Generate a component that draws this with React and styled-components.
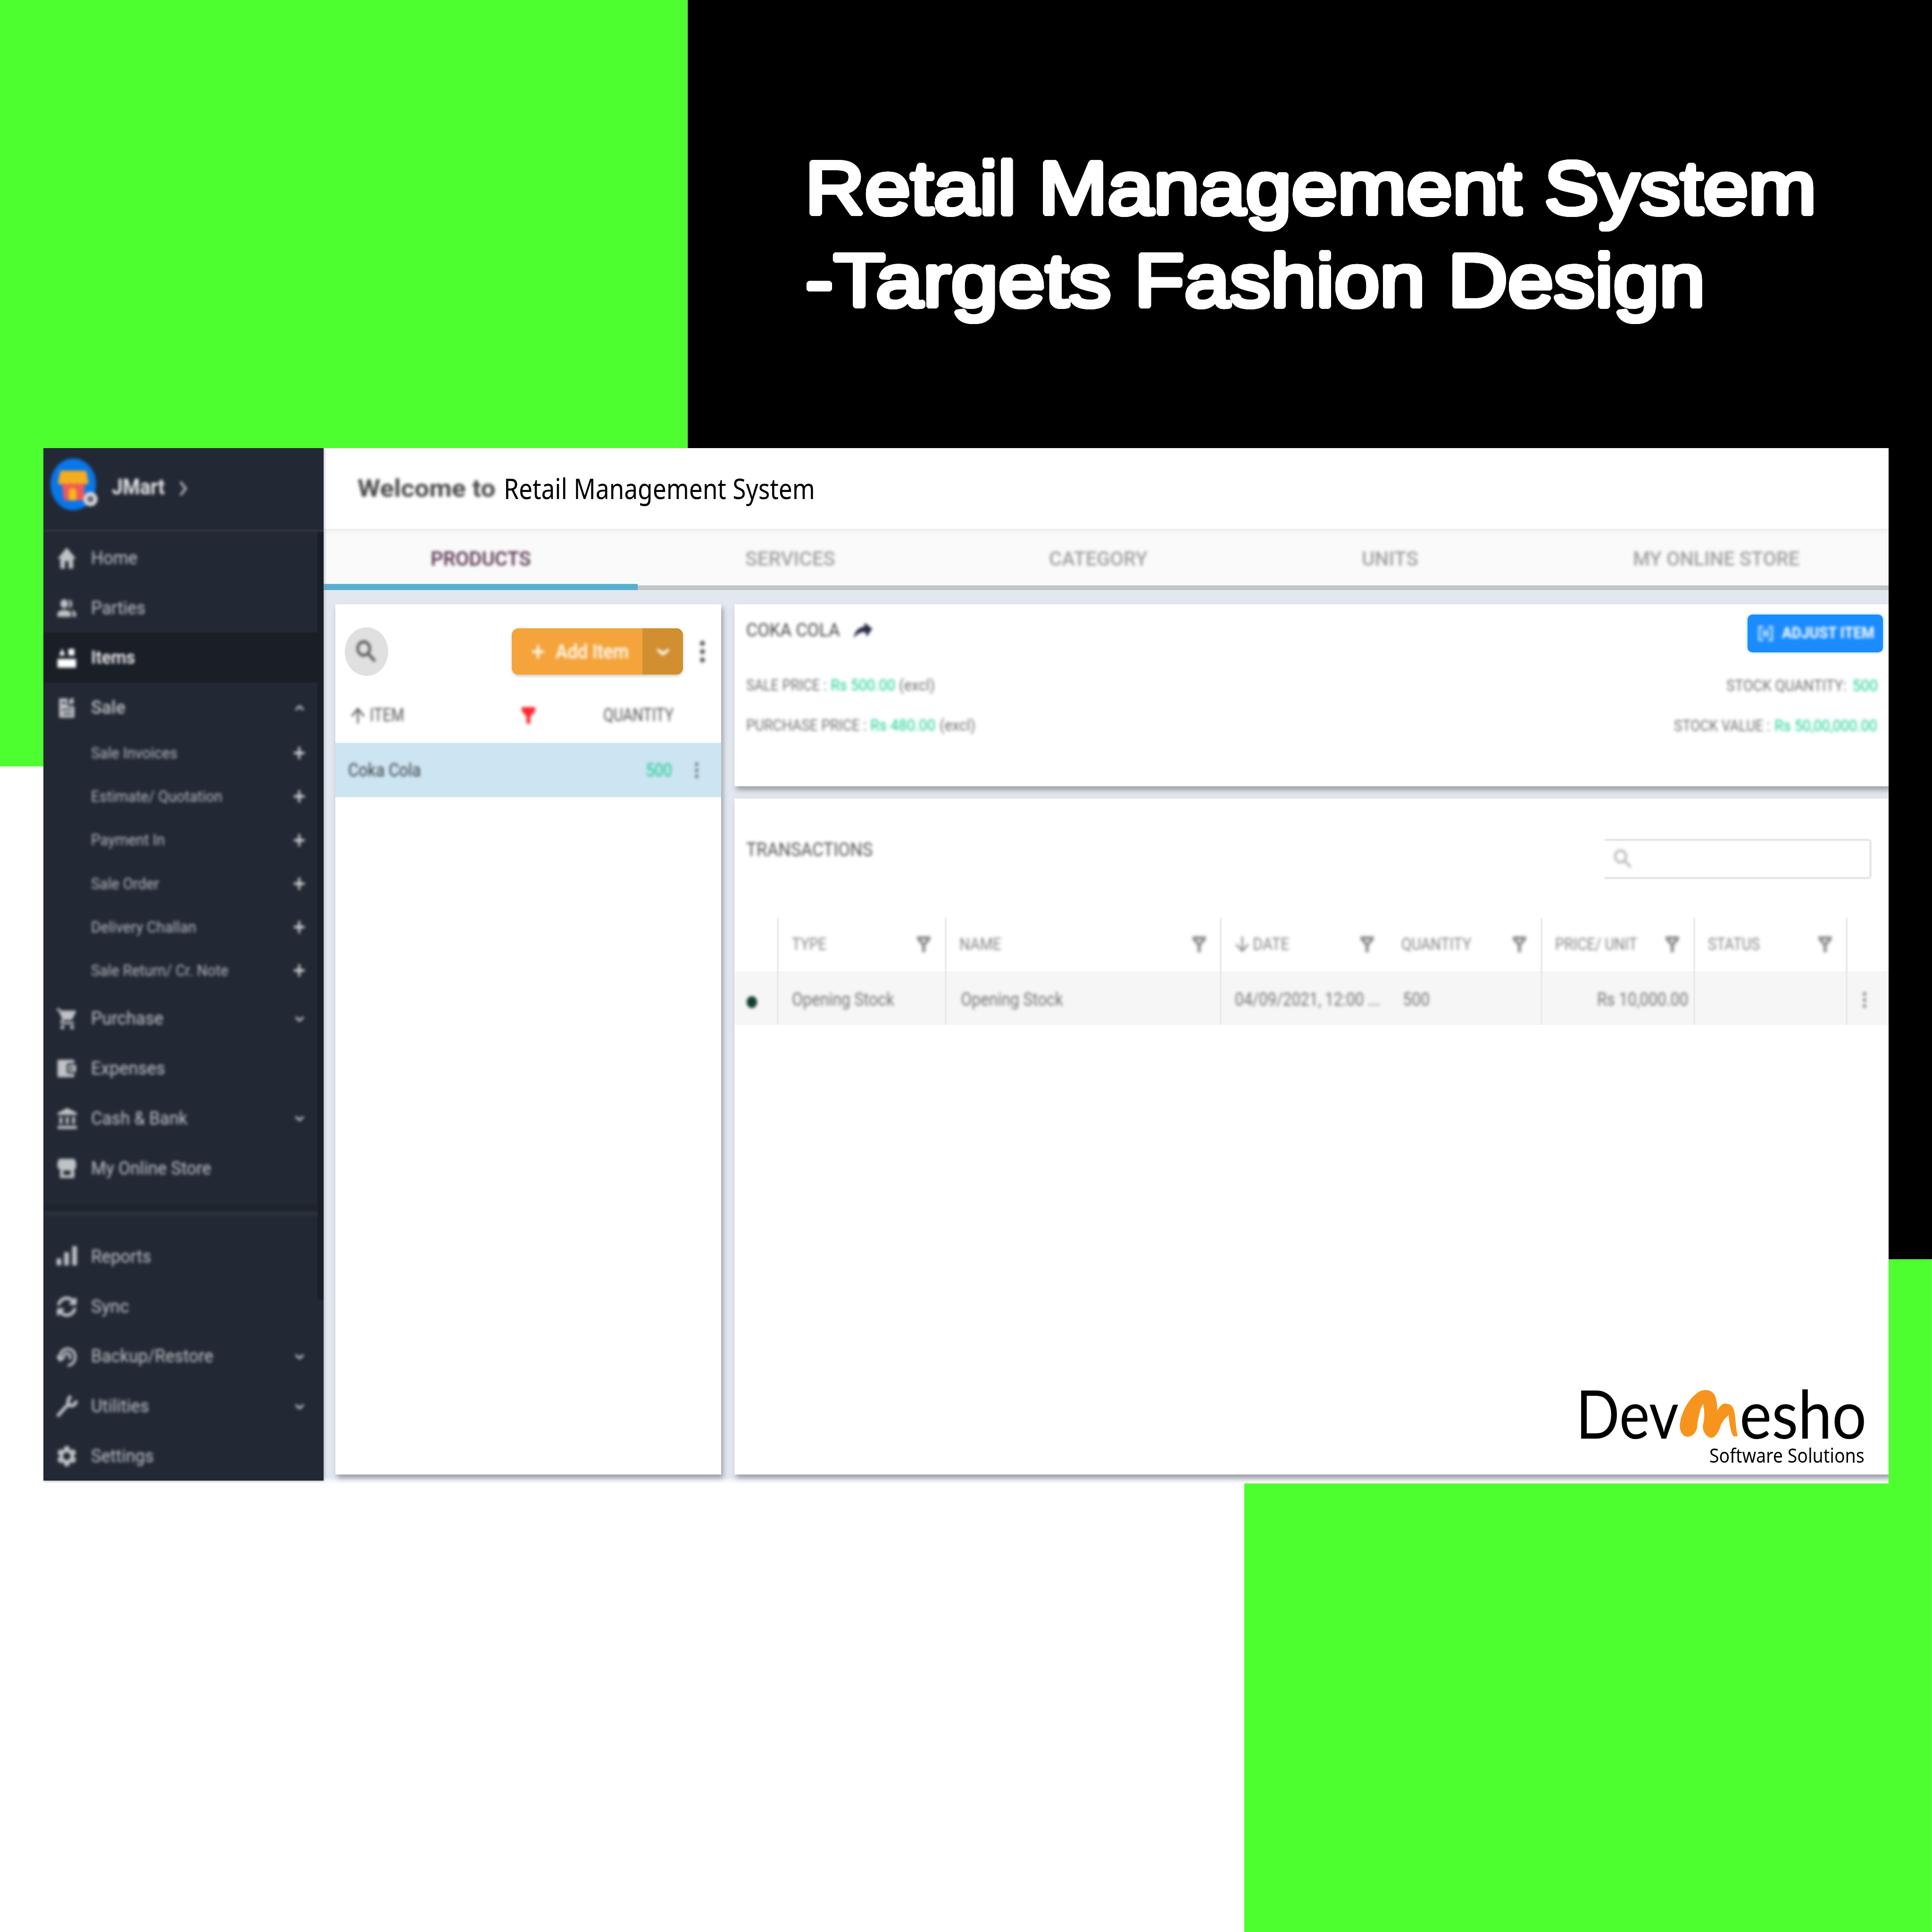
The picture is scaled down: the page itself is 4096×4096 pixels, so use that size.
import React, { useLayoutEffect, useRef, useState } from "react";
import styled, { createGlobalStyle, css } from "styled-components";
import { MdHome, MdShoppingCart, MdAccountBalance, MdSettings, MdSearch } from "react-icons/md";
import { FaSyncAlt } from "react-icons/fa";

/* 1rem is one tenth of a 156.8-unit wide layout grid */
const Global = createGlobalStyle`
  html { font-size: 26.1224px; }
  body { margin: 0; background: #fff; overflow: hidden; }
  * { box-sizing: border-box; }
`;

const GREEN = "#4dff2f";
const rem = (n) => `${n / 10}rem`;

/* ---------- text that keeps to a set measure ---------- */

const soft = css`
  filter: blur(3px);
`;

const Measure = styled.span`
  display: block;
  flex: none;
  width: ${(p) => rem(p.$w)};
  font-family: ${(p) => p.$family || 'Roboto, "Liberation Sans", sans-serif'};
  font-size: ${(p) => rem(p.$size)};
  font-weight: ${(p) => p.$weight || 400};
  color: ${(p) => p.$color || "inherit"};
  line-height: 1.15;
  white-space: nowrap;
  ${(p) => !p.$crisp && soft}
`;

const Stretch = styled.span`
  display: inline-block;
  transform-origin: 0 50%;
`;

function Fit({ w, size, weight, color, family, crisp, children }) {
  const ref = useRef(null);
  const [scale, setScale] = useState(1);
  useLayoutEffect(() => {
    const box = ref.current;
    setScale(box.parentElement.offsetWidth / box.offsetWidth);
  }, [children, w, size]);
  return (
    <Measure $w={w} $size={size} $weight={weight} $color={color} $family={family} $crisp={crisp}>
      <Stretch ref={ref} style={{ transform: `scaleX(${scale})` }}>{children}</Stretch>
    </Measure>
  );
}

/* ---------- poster ---------- */

const Poster = styled.main`
  width: 156.8rem;
  height: 156.8rem;
  display: flex;
  flex-direction: column;
  background-color: #fff;
  background-image: linear-gradient(${GREEN}, ${GREEN}), linear-gradient(${GREEN}, ${GREEN}), linear-gradient(#000, #000);
  background-repeat: no-repeat;
  background-size: 55.8rem 62.2rem, 55.8rem 54.6rem, 101rem 102.2rem;
  background-position: 0 0, 101rem 102.2rem, 55.8rem 0;
`;

const Headline = styled.h1`
  height: 36.38rem;
  margin: 0;
  padding: 11.5rem 0 0 65.35rem;
  display: flex;
  flex-direction: column;
  color: #fff;
  font-weight: 400;
`;

/* concentric shadows thicken the strokes and round their ends */
const ring = [0.06, 0.12, 0.18].flatMap((r) =>
  Array.from({ length: 24 }, (_, i) => {
    const a = (i / 24) * Math.PI * 2;
    return `${(Math.cos(a) * r * 0.95).toFixed(4)}rem ${(Math.sin(a) * r).toFixed(4)}rem 0 #fff`;
  })
).join(", ");

const HeadLine = styled.span`
  height: 7.52rem;
  display: flex;
  align-items: center;
  gap: 1.86rem;
  text-shadow: ${ring};
`;

/* ---------- window ---------- */

const Window = styled.section`
  width: 149.75rem;
  height: 84rem;
  margin-left: 3.52rem;
  display: flex;
  overflow: hidden;
  background: #fff;
`;

const Sidebar = styled.aside`
  width: 22.75rem;
  height: 83.8rem;
  flex: none;
  display: flex;
  flex-direction: column;
  background: #222935;
  color: #bfc2c6;
  box-shadow: 0 0 0.25rem #8a8d96;
  z-index: 1;
`;

const Store = styled.header`
  height: 6.8rem;
  padding: 0 0 0.25rem 0.58rem;
  display: flex;
  align-items: center;
  border-bottom: 0.25rem solid #2b303c;
`;

const Avatar = styled.div`
  position: relative;
  width: 3.7rem;
  height: 4.2rem;
  margin: -0.5rem 1.27rem 0 0;
  svg { display: block; width: 100%; height: 100%; overflow: visible; }
  ${soft}
`;

const MenuArea = styled.div`
  flex: 1;
  display: flex;
  background: linear-gradient(#1a1f27, #1a1f27) no-repeat 100% 0 / 0.5rem 62.3rem;
`;

const Menu = styled.nav`
  width: 22.25rem;
  padding-top: 0.05rem;
  display: flex;
  flex-direction: column;
`;

const MenuRow = styled.div`
  height: ${(p) => (p.$sub ? "3.53rem" : "4.05rem")};
  flex: none;
  padding: ${(p) => (p.$sub ? "0 1rem 0.15rem 3.86rem" : "0.1rem 1rem 0 1.06rem")};
  display: flex;
  align-items: center;
  background: ${(p) => (p.$active ? "#1a1f27" : "transparent")};
  color: ${(p) => (p.$active ? "#fff" : p.$sub ? "#b4b7bb" : "#bfc2c6")};
`;

const Push = styled.span`
  flex: 1;
`;

const Divider = styled.hr`
  width: 100%;
  height: 1rem;
  flex: none;
  margin: 1rem 0 1.12rem;
  border: 0;
  background: linear-gradient(#1d242c 50%, #2b323b 50%, #262d38 100%);
  filter: blur(2px);
`;

const Glyph = styled.span`
  display: block;
  flex: none;
  width: ${(p) => rem(p.$w)};
  height: ${(p) => rem(p.$h)};
  margin-right: ${(p) => rem(p.$gap || 0)};
  color: ${(p) => p.$color || "inherit"};
  svg { display: block; width: 100%; height: 100%; overflow: visible; }
  ${soft}
`;

const Stroke = ({ d, box = "0 0 24 24", width = 3 }) => (
  <svg viewBox={box} preserveAspectRatio="none" fill="none" stroke="currentColor" strokeWidth={width}><path d={d} /></svg>
);
const Solid = ({ d, box = "0 0 24 24" }) => (
  <svg viewBox={box} preserveAspectRatio="none" fill="currentColor" fillRule="evenodd"><path d={d} /></svg>
);

const Plus = () => <Stroke d="M12 1V23M1 12H23" width={4} />;
const ChevronDown = () => <Stroke d="M3 7L12 17L21 7" width={5} />;
const ChevronUp = () => <Stroke d="M3 17L12 7L21 17" width={5} />;
const Funnel = () => <Solid d="M0 0H24V6L15.5 14V24H8.5V14L0 6Z" />;
const FunnelLine = () => <Solid d="M0 0H24V5L15 14V24H9V14L0 5ZM8 5L12 10L16 5Z" />;
const Share = () => <Solid d="M0 23C1 13 7 6.5 14 6V0L24 9L17 21L15 14C9 14 4 17 0 23Z" />;
const Kebab = () => (
  <svg viewBox="0 0 6 24" preserveAspectRatio="none" fill="currentColor">
    <ellipse cx="3" cy="3" rx="3" ry="2.7" /><ellipse cx="3" cy="12" rx="3" ry="2.7" /><ellipse cx="3" cy="21" rx="3" ry="2.7" />
  </svg>
);

const wide = { preserveAspectRatio: "none" };
const ICONS = {
  home: <MdHome {...wide} viewBox="1 3 22 17" />,
  parties: <Solid d="M9 2C15 2 15 12 9 12C3 12 3 2 9 2ZM14 2.5C20 1 20 13 14 11.8C16 9 16 5 14 2.5ZM1 22V18C2 13 16 13 17 18V22ZM17 14C21 14.5 23 17 23 19V22H19V18Q19 16 17 14Z" />,
  items: <Solid d="M3 9L6.5 1L10 9ZM14 1.5H21V9H14ZM1 13H23V22Q23 23 22 23H2Q1 23 1 22Z" />,
  sale: <Solid d="M3 1H13V10H21V23H3ZM15 2L20 0V7L15 8ZM6 5V7H11V5ZM6 13V14.5H18V13ZM8 18V19.5H18V18Z" />,
  purchase: <MdShoppingCart {...wide} viewBox="1 2 21 20" />,
  expenses: <Solid d="M2 2H19Q21 2 21 4V6H15Q12 6 12 9V15Q12 18 15 18H21V20Q21 22 19 22H2Q1 22 1 20V4Q1 2 2 2ZM15 8H23V16H15Q14 16 14 15V9Q14 8 15 8ZM16 10.5V13.5H19V10.5Z" />,
  bank: <MdAccountBalance {...wide} viewBox="1 1 21 21" />,
  shop: <Solid d="M3 1H21L23 5V11Q23 12.5 21 12.5V23H4V12.5Q1 12.5 1 11V5ZM8 14.5V19.5H16.5V14.5Z" />,
  reports: <Solid d="M0 14H5.5V22H0ZM9 7H14.5V22H9ZM18.5 0H24V22H18.5Z" />,
  sync: <FaSyncAlt {...wide} />,
  backup: <Stroke d="M4 15C3 7 8 3 13 3C19 3 22 8 22 12C22 18 18 22 13 22M8 14C8 9 11 8 13 8C16 9 17 12 15 15M1 11L4 16L9 13" width={3} />,
  utilities: <Stroke d="M1 23L13 10M17 0C12 4 13 10 17 11C20 11 23 9 23 5" width={4} />,
  settings: <MdSettings {...wide} viewBox="2 2 20 20" />,
};

const MENU = [
  { icon: "home", label: "Home", w: 37.5 },
  { icon: "parties", label: "Parties", w: 44 },
  { icon: "items", label: "Items", w: 35.5, active: true },
  { icon: "sale", label: "Sale", w: 28, weight: 500, end: "up" },
  { label: "Sale Invoices", w: 70, sub: true },
  { label: "Estimate/ Quotation", w: 106.5, sub: true },
  { label: "Payment In", w: 60, sub: true },
  { label: "Sale Order", w: 55, sub: true },
  { label: "Delivery Challan", w: 85.5, sub: true },
  { label: "Sale Return/ Cr. Note", w: 111.5, sub: true },
  { icon: "purchase", label: "Purchase", w: 59, end: "down" },
  { icon: "expenses", label: "Expenses", w: 60 },
  { icon: "bank", label: "Cash & Bank", w: 78.5, end: "down" },
  { icon: "shop", label: "My Online Store", w: 97.5 },
  null,
  { icon: "reports", label: "Reports", w: 49 },
  { icon: "sync", label: "Sync", w: 31 },
  { icon: "backup", label: "Backup/Restore", w: 99, end: "down" },
  { icon: "utilities", label: "Utilities", w: 47, end: "down" },
  { icon: "settings", label: "Settings", w: 51 },
];

function MenuItem({ item }) {
  return (
    <MenuRow $sub={item.sub} $active={item.active}>
      {item.icon && <Glyph $w={16.5} $h={17} $gap={11.5}>{ICONS[item.icon]}</Glyph>}
      <Fit w={item.w} size={item.sub ? 13 : 15} weight={item.weight || (item.active ? 500 : 400)}>{item.label}</Fit>
      <Push />
      {item.end && <Glyph $w={8.5} $h={7} $gap={0.5}>{item.end === "up" ? <ChevronUp /> : <ChevronDown />}</Glyph>}
      {item.sub && <Glyph $w={9.5} $h={11} $color="#dcdcdd"><Plus /></Glyph>}
    </MenuRow>
  );
}

/* ---------- main area ---------- */

const Main = styled.div`
  flex: 1;
  min-width: 0;
  height: 84rem;
  display: flex;
  flex-direction: column;
  background: linear-gradient(#e3e7ef 83.5rem, #fafbfd 83.9rem);
`;

const Welcome = styled.header`
  height: 6.55rem;
  flex: none;
  padding: 0 0 0 2.75rem;
  display: flex;
  align-items: center;
  gap: 0.66rem;
  background: #fff;
`;

const Tabs = styled.nav`
  height: 4.95rem;
  flex: none;
  display: flex;
  background: #fafafa;
  box-shadow: inset 0 0.25rem 0.25rem #efefef;
`;

const Tab = styled.div`
  width: ${(p) => rem(p.$w)};
  flex: none;
  padding-top: ${(p) => (p.$on ? "0.4rem" : "0.3rem")};
  display: flex;
  align-items: center;
  justify-content: center;
  border-bottom: ${(p) => (p.$on ? "0.5rem solid #5aafd0" : "0.4rem solid #c4c5c8")};
  color: ${(p) => (p.$on ? "#56304f" : "#a0a0a0")};
`;

const Panels = styled.div`
  flex: 1;
  padding: 1.15rem 0 0.7rem 0.93rem;
  display: flex;
  gap: 1.07rem;
`;

const Card = styled.section`
  background: #fff;
  box-shadow: 0.15rem 0.3rem 0.4rem rgba(90, 90, 100, 0.5);
`;

const ListCard = styled(Card)`
  width: 31.35rem;
  flex: none;
`;

const ListTools = styled.div`
  height: 7.8rem;
  padding: 0 1.35rem 0.1rem 0.8rem;
  display: flex;
  align-items: center;
`;

const RoundButton = styled.button`
  width: 3.5rem;
  height: 3.95rem;
  padding: 0;
  border: 0;
  border-radius: 50%;
  display: flex;
  align-items: center;
  justify-content: center;
  background: #e0e0e0;
  color: #444;
`;

const AddButton = styled.button`
  width: 13.9rem;
  height: 3.75rem;
  margin: 0 1.35rem 0 auto;
  padding: 0;
  border: 0;
  border-radius: 0.55rem;
  display: flex;
  overflow: hidden;
  background: #f4a43a;
  color: #fff;
  box-shadow: 0 0.15rem 0.2rem #d9cfc2;
`;

const AddMain = styled.span`
  width: 10.6rem;
  display: flex;
  align-items: center;
  padding-left: 1.6rem;
`;

const AddMore = styled.span`
  flex: 1;
  display: flex;
  align-items: center;
  justify-content: center;
  background: #d18f30;
`;

const ListHead = styled.div`
  height: 3.45rem;
  padding: 0 3.9rem 1rem 1.25rem;
  display: flex;
  align-items: center;
  color: #555;
`;

const ListRow = styled.div`
  height: 4.4rem;
  padding: 0.1rem 1.9rem 0 1.05rem;
  display: flex;
  align-items: center;
  background: #cde5f2;
  color: #333c42;
`;

const Details = styled.div`
  flex: 1;
  display: flex;
  flex-direction: column;
  gap: 1rem;
`;

const Summary = styled(Card)`
  height: 14.8rem;
  flex: none;
  padding: 0.85rem 0.55rem 0 0.93rem;
  display: flex;
  justify-content: space-between;
  color: #6f6f6f;
`;

const Column = styled.div`
  display: flex;
  flex-direction: column;
  align-items: ${(p) => (p.$end ? "flex-end" : "flex-start")};
`;

const Title = styled.div`
  height: 2.6rem;
  display: flex;
  align-items: center;
  gap: 1.15rem;
  color: #444;
  margin-bottom: 1.5rem;
`;

const Fact = styled.div`
  height: 3.26rem;
  padding-right: ${(p) => (p.$end ? "0.45rem" : "0")};
  display: flex;
  align-items: center;
`;

const Space = styled.span`
  width: ${(p) => rem(p.$w)};
  flex: none;
`;

const AdjustButton = styled.button`
  width: 11rem;
  height: 3.05rem;
  margin-bottom: 1.07rem;
  padding: 0 0.7rem 0 0.85rem;
  border: 0;
  border-radius: 0.4rem;
  display: flex;
  align-items: center;
  justify-content: space-between;
  background: #1a8cff;
  color: #fff;
  box-shadow: 0 0 0.25rem #8cc4ff;
`;

const Transactions = styled(Card)`
  flex: 1;
  display: flex;
  flex-direction: column;
`;

const TransHead = styled.div`
  height: 9.65rem;
  flex: none;
  padding: 3.23rem 1.47rem 0 0.93rem;
  display: flex;
  align-items: flex-start;
  justify-content: space-between;
  color: #555;
`;

const SearchBox = styled.div`
  width: 21.65rem;
  height: 3.3rem;
  padding-left: 0.75rem;
  display: flex;
  align-items: center;
  border: 0.2rem solid #e8e8e8;
  border-left: 0;
  border-radius: 0 0.3rem 0.3rem 0;
  color: #b0b0b0;
`;

const Table = styled.div`
  display: grid;
  grid-template-columns: 3.6rem 13.6rem 22.35rem 13.5rem 12.5rem 12.4rem 12.4rem 3.4rem;
  grid-template-rows: 4.35rem 4.35rem;
`;

const Cell = styled.div`
  padding: ${(p) => (p.$row ? "0.3rem" : "0")} ${(p) => rem(p.$right ?? 11.5)} 0 ${(p) => rem(p.$left ?? 10.5)};
  display: flex;
  align-items: center;
  justify-content: ${(p) => (p.$pack ? p.$pack : "flex-start")};
  border-right: ${(p) => (p.$line ? "0.18rem solid #ebebeb" : "0")};
  background: ${(p) => (p.$row ? "#f6f6f6" : "#fff")};
  color: ${(p) => (p.$row ? "#737373" : "#858585")};
`;

const Dot = styled.span`
  width: 0.85rem;
  height: 0.95rem;
  margin-top: 0.35rem;
  border-radius: 50%;
  background: #123f2d;
  ${soft}
`;

const Brand = styled.footer`
  margin: auto 1.9rem 0.68rem 0;
  display: flex;
  flex-direction: column;
  align-items: flex-end;
  color: #000;
`;

const Wordmark = styled.div`
  height: 4.95rem;
  display: flex;
  align-items: center;
`;

const Mark = styled.svg`
  display: block;
  width: 4.75rem;
  height: 3.95rem;
  margin: 0.12rem 0.1rem 0 0.05rem;
`;

const Tagline = styled.div`
  padding-right: 0.15rem;
`;

const COLUMNS = [
  { label: "TYPE", w: 28, line: true },
  { label: "NAME", w: 34, line: true },
  { label: "DATE", w: 30, sorted: true },
  { label: "QUANTITY", w: 56.5, line: true },
  { label: "PRICE/ UNIT", w: 66.5, line: true },
  { label: "STATUS", w: 42, line: true },
];

const MYRIAD = '"Noto Sans", "Open Sans", sans-serif';
const ROUNDED = '"Liberation Sans", Arial, sans-serif';

const HEADLINE = [
  [["Retail", 171], ["Management", 391.5], ["System", 221]],
  [["-Targets", 248.5], ["Fashion", 236], ["Design", 208.5]],
];

export default function App() {
  return (
    <>
      <Global />
      <Poster>
        <Headline>
          {HEADLINE.map((words, i) => (
            <HeadLine key={i}>
              {words.map(([word, w]) => <Fit key={word} crisp w={w} size={60.5} family={ROUNDED}>{word}</Fit>)}
            </HeadLine>
          ))}
        </Headline>
        <Window>
          <Sidebar>
            <Store>
              <Avatar>
                <svg viewBox="0 0 37 42" preserveAspectRatio="none">
                  <ellipse cx="18.5" cy="21" rx="18.5" ry="21" fill="#0877ea" />
                  <path d="M9 20H28L27 34H11Z" fill="#f0575c" />
                  <path d="M8 10H29L31 20Q29 22 27 20Q24 22 22 20Q19 22 16 20Q13 22 11 20Q8 22 6 20Z" fill="#f5ad22" />
                  <path d="M15 34V27Q15 24 18 24Q21 24 21 27V34Z" fill="#fdb813" />
                  <circle cx="32.5" cy="33" r="4.2" fill="#667" stroke="#dededf" strokeWidth="3" />
                </svg>
              </Avatar>
              <Fit w={43} size={17.5} weight={700} color="#e6e6e8">JMart</Fit>
              <Space $w={11} />
              <Glyph $w={8} $h={13}><Stroke d="M5 4L18 14L5 24" width={4} /></Glyph>
            </Store>
            <MenuArea>
              <Menu>
                {MENU.map((item, i) => (item ? <MenuItem key={i} item={item} /> : <Divider key={i} />))}
              </Menu>
            </MenuArea>
          </Sidebar>

          <Main>
            <Welcome>
              <Fit w={112} size={20} weight={700} color="#4c4c4c">Welcome to</Fit>
              <Fit crisp w={252.5} size={23} color="#000" family={MYRIAD}>Retail Management System</Fit>
            </Welcome>
            <Tabs>
              <Tab $w={255} $on><Fit w={81} size={16} weight={500}>PRODUCTS</Fit></Tab>
              <Tab $w={247}><Fit w={73} size={16} weight={500}>SERVICES</Fit></Tab>
              <Tab $w={253}><Fit w={80} size={16} weight={500}>CATEGORY</Fit></Tab>
              <Tab $w={221}><Fit w={46} size={16} weight={500}>UNITS</Fit></Tab>
              <Tab $w={308}><Fit w={135} size={16} weight={500}>MY ONLINE STORE</Fit></Tab>
            </Tabs>

            <Panels>
              <ListCard>
                <ListTools>
                  <RoundButton><Glyph $w={16} $h={18}><MdSearch {...wide} viewBox="3 3 18 18" /></Glyph></RoundButton>
                  <AddButton>
                    <AddMain>
                      <Glyph $w={10.5} $h={12} $gap={9}><Plus /></Glyph>
                      <Fit w={59.5} size={16.5} weight={500}>Add Item</Fit>
                    </AddMain>
                    <AddMore><Glyph $w={12} $h={9}><ChevronDown /></Glyph></AddMore>
                  </AddButton>
                  <Glyph $w={4} $h={18} $color="#555"><Kebab /></Glyph>
                </ListTools>
                <ListHead>
                  <Glyph $w={12} $h={13} $gap={3.5}><Stroke d="M12 24V2M2 13L12 2L22 13" width={2.6} /></Glyph>
                  <Fit w={28} size={14.5}>ITEM</Fit>
                  <Push />
                  <Glyph $w={11} $h={13.5} $gap={55} $color="#ff2a33"><Funnel /></Glyph>
                  <Fit w={57} size={14.5}>QUANTITY</Fit>
                </ListHead>
                <ListRow>
                  <Fit w={59} size={14.5}>Coka Cola</Fit>
                  <Push />
                  <Fit w={21.5} size={14.5} color="#14c892">500</Fit>
                  <Space $w={18.5} />
                  <Glyph $w={2.4} $h={13} $color="#59646b"><Kebab /></Glyph>
                </ListRow>
              </ListCard>

              <Details>
                <Summary>
                  <Column>
                    <Title>
                      <Fit w={76} size={15}>COKA COLA</Fit>
                      <Glyph $w={15} $h={13} $color="#272a45"><Share /></Glyph>
                    </Title>
                    <Fact>
                      <Fit w={65.5} size={13}>SALE PRICE :</Fit><Space $w={3} />
                      <Fit w={52.5} size={13} color="#19cf94">Rs 500.00</Fit><Space $w={3} />
                      <Fit w={29} size={13}>(excl)</Fit>
                    </Fact>
                    <Fact>
                      <Fit w={98} size={13}>PURCHASE PRICE :</Fit><Space $w={3} />
                      <Fit w={53} size={13} color="#19cf94">Rs 480.00</Fit><Space $w={3} />
                      <Fit w={29} size={13}>(excl)</Fit>
                    </Fact>
                  </Column>
                  <Column $end>
                    <AdjustButton>
                      <Glyph $w={12.5} $h={13}>
                        <Stroke d="M8 2H2V22H8M16 2H22V22H16M9 6V18M15 6V18M12 10V14" width={2.2} />
                      </Glyph>
                      <Fit w={75} size={12.5} weight={700}>ADJUST ITEM</Fit>
                    </AdjustButton>
                    <Fact $end>
                      <Fit w={97.5} size={13}>STOCK QUANTITY:</Fit><Space $w={4.5} />
                      <Fit w={20.5} size={13} color="#19cf94">500</Fit>
                    </Fact>
                    <Fact $end>
                      <Fit w={78} size={13}>STOCK VALUE :</Fit><Space $w={3.5} />
                      <Fit w={83.5} size={13} color="#19cf94">Rs 50,00,000.00</Fit>
                    </Fact>
                  </Column>
                </Summary>

                <Transactions>
                  <TransHead>
                    <Fit w={102.5} size={15.5}>TRANSACTIONS</Fit>
                    <SearchBox><Glyph $w={14.5} $h={15.5}><MdSearch {...wide} viewBox="3 3 18 18" /></Glyph></SearchBox>
                  </TransHead>
                  <Table>
                    <Cell $line $left={0} $right={0} />
                    {COLUMNS.map((c) => (
                      <Cell key={c.label} $line={c.line}>
                        {c.sorted && <Glyph $w={12} $h={13} $gap={2.5}><Stroke d="M12 0V22M2 12L12 22L22 12" width={2.6} /></Glyph>}
                        <Fit w={c.w} size={14}>{c.label}</Fit>
                        <Push />
                        <Glyph $w={11} $h={13} $color="#929292"><FunnelLine /></Glyph>
                      </Cell>
                    ))}
                    <Cell $left={0} $right={0} />
                    <Cell $row $line $left={9.8} $right={0}><Dot /></Cell>
                    <Cell $row $line><Fit w={83} size={15}>Opening Stock</Fit></Cell>
                    <Cell $row $line $left={11.5}><Fit w={83} size={15}>Opening Stock</Fit></Cell>
                    <Cell $row $right={5}><Fit w={118} size={15}>04/09/2021, 12:00 ...</Fit></Cell>
                    <Cell $row $line $left={12}><Fit w={22} size={15}>500</Fit></Cell>
                    <Cell $row $line $right={3.8} $pack="flex-end"><Fit w={74} size={15}>Rs 10,000.00</Fit></Cell>
                    <Cell $row $line />
                    <Cell $row $left={12.5} $right={0}><Glyph $w={2.4} $h={13}><Kebab /></Glyph></Cell>
                  </Table>
                  <Brand>
                    <Wordmark>
                      <Fit crisp w={83.5} size={54} family='Lato, "Open Sans", sans-serif'>Dev</Fit>
                      <Mark viewBox="565 150 275 380" preserveAspectRatio="none">
                        <path fill="#f7941d" d="M590 515C572 500 560 450 568 400C575 330 610 200 665 160C690 145 720 155 732 200C740 240 742 280 742 315C750 290 760 265 775 260C800 258 815 275 822 320C828 380 830 470 838 513L820 517C808 500 800 440 795 350C780 370 765 400 758 430C750 480 735 520 715 528C690 520 672 480 674 430C680 400 685 330 675 262C660 300 655 360 648 420C650 480 625 520 600 518Z" />
                      </Mark>
                      <Fit crisp w={103} size={54} family='Lato, "Open Sans", sans-serif'>esho</Fit>
                    </Wordmark>
                    <Tagline><Fit crisp w={126} size={16} family={MYRIAD}>Software Solutions</Fit></Tagline>
                  </Brand>
                </Transactions>
              </Details>
            </Panels>
          </Main>
        </Window>
      </Poster>
    </>
  );
}
